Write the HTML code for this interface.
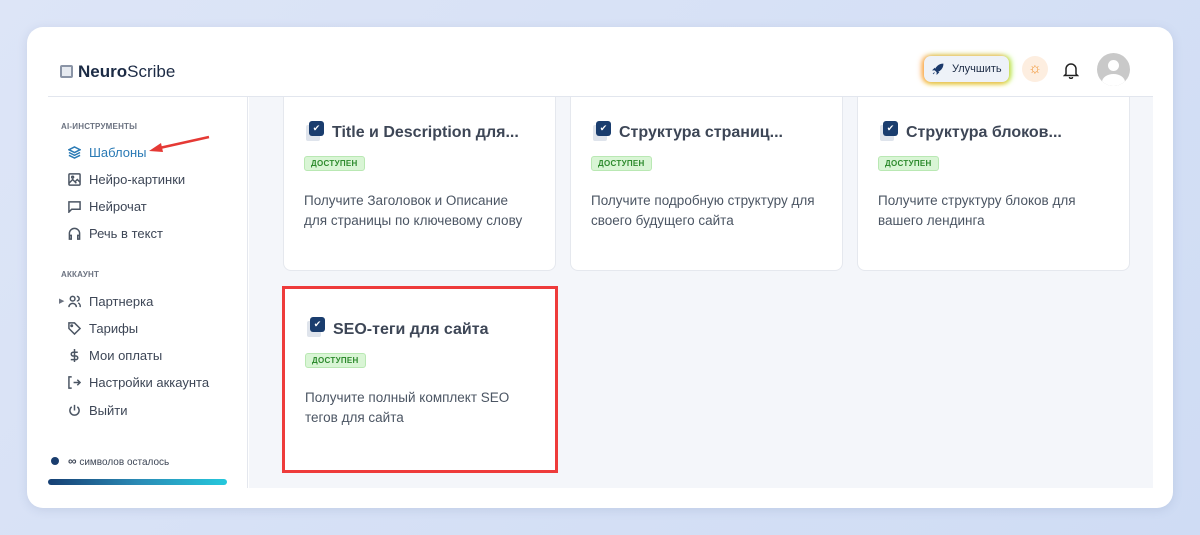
<!DOCTYPE html>
<html><head><meta charset="utf-8"><style>
*{box-sizing:border-box;margin:0;padding:0}
body{width:1200px;height:535px;overflow:hidden;background:linear-gradient(135deg,#dde5f7,#cfdcf4);font-family:"Liberation Sans",sans-serif;position:relative;color:#3d4656}
.win{position:absolute;left:27px;top:27px;width:1146px;height:481px;background:#fff;border-radius:16px;box-shadow:0 2px 10px rgba(80,100,150,.15);overflow:hidden}
.a{position:absolute}
.logo{left:33px;top:35px;font-size:17px;color:#1c2b45}
.hdr{left:21px;top:69px;width:1105px;height:1px;background:#e2e6ee}
.side{left:220px;top:70px;width:1px;height:391px;background:#e4e7ee}
.main{left:222px;top:70px;width:904px;height:391px;background:#f4f6fa;overflow:hidden}
.sec{font-size:8px;font-weight:bold;color:#6b7280;letter-spacing:.2px}
.it{font-size:13px;color:#3d4656;display:flex;align-items:center;gap:8px}
.it svg{width:13px;height:13px;fill:none;stroke:#4b5563;stroke-width:1.6}
.card{position:absolute;background:#fff;border:1px solid #e5e8ee;border-radius:8px}
.ic{position:absolute;left:22px;width:18px;height:20px}
.ttl{position:absolute;left:48px;font-size:16px;font-weight:bold;color:#3d4656;white-space:nowrap}
.bdg{position:absolute;left:20px;background:#d9f5d5;border:1px solid #b9e8b3;color:#2e8b2e;font-size:8px;font-weight:bold;padding:2px 6px;border-radius:3px;letter-spacing:.3px}
.ds{position:absolute;left:20px;font-size:13.5px;line-height:20px;color:#4b5563;width:226px}
</style></head><body>
<div class="win">
<div class="a logo"><span style="display:inline-block;width:13px;height:13px;border:2px solid #8a94a6;border-radius:2px;vertical-align:-1px;margin-right:5px;background:#e6eaf0"></span><b>Neuro</b>Scribe</div>
<div class="a" style="left:897px;top:29px;width:85px;height:26px;border-radius:7px;background:#eef2f8;box-shadow:-2px 0 6px #ff9f50,2px 0 6px #a8f050,0 2px 5px #ffe060;font-size:11px;line-height:26px;color:#1c2b45;padding-left:28px">Улучшить<svg style="position:absolute;left:8px;top:7px" width="12" height="12" viewBox="0 0 12 12"><path d="M11 1C7 1 4 4 3 7l2 2c3-1 6-4 6-8zM3 7L1 7 3 5M5 9v2l2-2M2.5 9.5L1 11" fill="#1c3a6b" stroke="#1c3a6b" stroke-width=".8"/></svg></div>
<div class="a" style="left:995px;top:29px;width:26px;height:26px;border-radius:50%;background:#fdeee0;color:#f0902a;font-size:15px;text-align:center;line-height:26px">☼</div>
<svg class="a" style="left:1036px;top:34px" width="16" height="18" viewBox="0 0 16 18" fill="none" stroke="#222" stroke-width="1.5"><path d="M3 13V8a5 5 0 0110 0v5l1.5 1.5h-13z M6.5 16a1.5 1.5 0 003 0"/></svg>
<div class="a" style="left:1070px;top:26px;width:33px;height:33px;border-radius:50%;background:#c9c9c9;overflow:hidden"><div style="position:absolute;left:11px;top:7px;width:11px;height:11px;border-radius:50%;background:#fff"></div><div style="position:absolute;left:5px;top:21px;width:23px;height:16px;border-radius:50%;background:#fff"></div></div>
<div class="a hdr"></div>
<div class="a side"></div>
<div class="a sec" style="left:34px;top:95px">AI-ИНСТРУМЕНТЫ</div>
<div class="a it" style="left:41px;top:118px;color:#2a7ab5"><svg viewBox="0 0 14 14" style="stroke:#2a7ab5"><path d="M7 1L1 4l6 3 6-3zM1 7l6 3 6-3M1 10l6 3 6-3"/></svg>Шаблоны</div>
<svg class="a" style="left:120px;top:107px" width="65" height="20"><path d="M62 3L8 15" stroke="#e53935" stroke-width="2.5"/><path d="M2 17l12-8 2 9z" fill="#e53935"/></svg>
<div class="a it" style="left:41px;top:145px"><svg viewBox="0 0 14 14"><rect x="1" y="1" width="12" height="12" rx="1"/><path d="M1 11l4-4 4 4M8 9l2-2 3 3"/><circle cx="5" cy="4.5" r="1"/></svg>Нейро-картинки</div>
<div class="a it" style="left:41px;top:172px"><svg viewBox="0 0 14 14"><path d="M1 2h12v8H4l-3 3z"/></svg>Нейрочат</div>
<div class="a it" style="left:41px;top:199px"><svg viewBox="0 0 14 14"><path d="M1.5 11V7a5.5 5.5 0 0111 0v4M1.5 9h2v4h-2zM10.5 9h2v4h-2z"/></svg>Речь в текст</div>
<div class="a sec" style="left:34px;top:243px">АККАУНТ</div>
<div class="a" style="left:32px;top:270px;font-size:7px;color:#6b7280">▶</div>
<div class="a it" style="left:41px;top:267px"><svg viewBox="0 0 14 14"><circle cx="5" cy="4" r="2.5"/><path d="M1 13a4 4 0 018 0M9.5 1.5a2.5 2.5 0 010 5M11 8.5a4 4 0 012 4.5"/></svg>Партнерка</div>
<div class="a it" style="left:41px;top:294px"><svg viewBox="0 0 14 14"><path d="M1 1h6l6 6-6 6-6-6z"/><circle cx="4" cy="4" r=".8"/></svg>Тарифы</div>
<div class="a it" style="left:41px;top:321px"><svg viewBox="0 0 14 14"><path d="M7 0v14M10.5 3.5H5.5a2 2 0 000 4h3a2 2 0 010 4H3"/></svg>Мои оплаты</div>
<div class="a it" style="left:41px;top:348px"><svg viewBox="0 0 14 14"><path d="M4 1H1v12h3M6 7h7M10 4l3 3-3 3"/></svg>Настройки аккаунта</div>
<div class="a it" style="left:41px;top:376px"><svg viewBox="0 0 14 14"><path d="M7 1v6M4 3a5 5 0 106 0"/></svg>Выйти</div>
<div class="a" style="left:24px;top:430px;width:8px;height:8px;border-radius:50%;background:#1a3d6e"></div>
<div class="a" style="left:41px;top:427px;font-size:10px;color:#3d4656"><b style="font-size:12px">∞</b> символов осталось</div>
<div class="a" style="left:21px;top:452px;width:179px;height:6px;border-radius:3px;background:linear-gradient(90deg,#163f73,#2a8ab5,#25c8dc)"></div>

<div class="a main">
<div class="card" style="left:34px;top:-15px;width:273px;height:189px">
<div class="ic" style="top:38px"><div style="position:absolute;left:0;top:4px;width:14px;height:16px;background:#dfe4ec;border-radius:2px"></div><div style="position:absolute;left:3px;top:0;width:15px;height:15px;background:#1a3d6e;border-radius:3px;color:#fff;font-size:9px;text-align:center;line-height:15px">✔</div></div>
<div class="ttl" style="top:41px">Title и Description для...</div>
<div class="bdg" style="top:73px">ДОСТУПЕН</div>
<div class="ds" style="top:108px">Получите Заголовок и Описание для страницы по ключевому слову</div></div>
<div class="card" style="left:321px;top:-15px;width:273px;height:189px">
<div class="ic" style="top:38px"><div style="position:absolute;left:0;top:4px;width:14px;height:16px;background:#dfe4ec;border-radius:2px"></div><div style="position:absolute;left:3px;top:0;width:15px;height:15px;background:#1a3d6e;border-radius:3px;color:#fff;font-size:9px;text-align:center;line-height:15px">✔</div></div>
<div class="ttl" style="top:41px">Структура страниц...</div>
<div class="bdg" style="top:73px">ДОСТУПЕН</div>
<div class="ds" style="top:108px">Получите подробную структуру для своего будущего сайта</div></div>
<div class="card" style="left:608px;top:-15px;width:273px;height:189px">
<div class="ic" style="top:38px"><div style="position:absolute;left:0;top:4px;width:14px;height:16px;background:#dfe4ec;border-radius:2px"></div><div style="position:absolute;left:3px;top:0;width:15px;height:15px;background:#1a3d6e;border-radius:3px;color:#fff;font-size:9px;text-align:center;line-height:15px">✔</div></div>
<div class="ttl" style="top:41px">Структура блоков...</div>
<div class="bdg" style="top:73px">ДОСТУПЕН</div>
<div class="ds" style="top:108px">Получите структуру блоков для вашего лендинга</div></div>
<div class="card" style="left:33px;top:189px;width:276px;height:187px;border:3px solid #ee3b3b;border-radius:0">
<div class="ic" style="top:28px"><div style="position:absolute;left:0;top:4px;width:14px;height:16px;background:#dfe4ec;border-radius:2px"></div><div style="position:absolute;left:3px;top:0;width:15px;height:15px;background:#1a3d6e;border-radius:3px;color:#fff;font-size:9px;text-align:center;line-height:15px">✔</div></div>
<div class="ttl" style="top:32px">SEO-теги для сайта</div>
<div class="bdg" style="top:64px">ДОСТУПЕН</div>
<div class="ds" style="top:99px">Получите полный комплект SEO тегов для сайта</div></div>
</div>
</div>
</body></html>
